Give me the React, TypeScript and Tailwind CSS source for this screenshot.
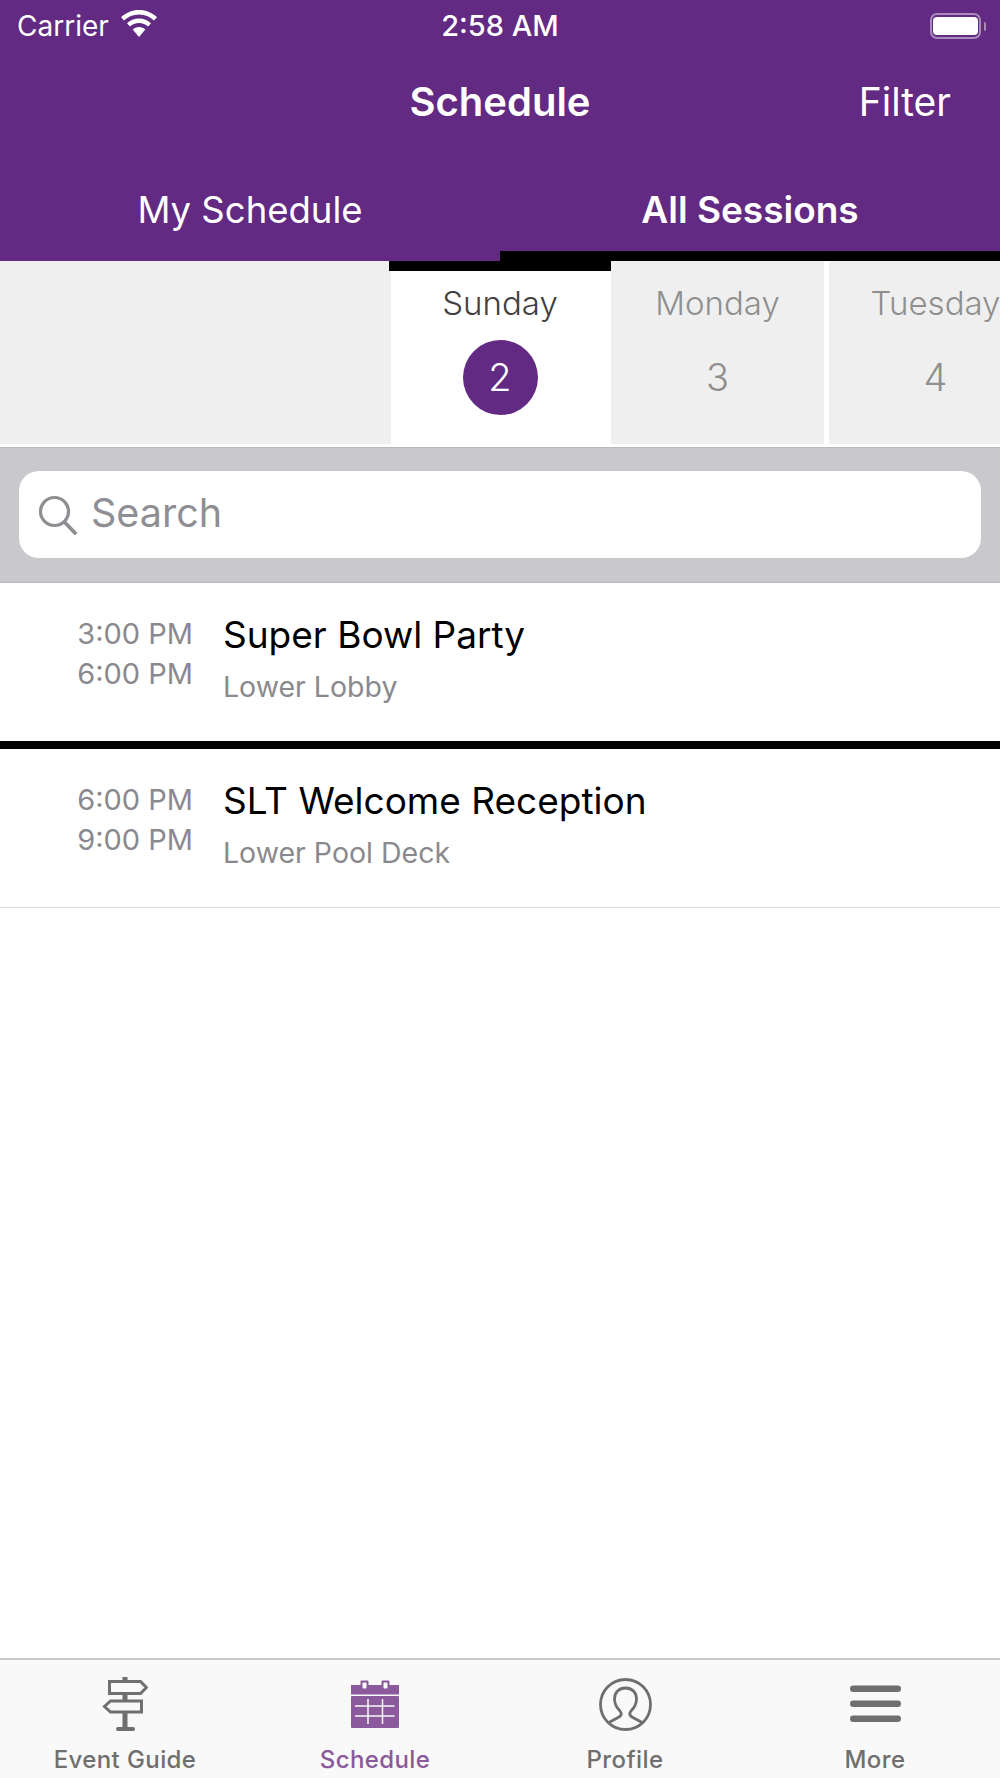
const SignIcon = () => (
  <svg width="46" height="54" viewBox="0 0 46 54" fill="none" stroke="#6f6f6f" strokeWidth="3">
    <path d="M7.500 4.500h31l6 6-6 6h-31z" />
    <path d="M39.500 24h-31l-6 5.500 6 5.500h31z" />
    <path d="M23 0v4.500M23 16.500V24M23 35v16" strokeWidth="5" />
    <path d="M16 52h15" strokeWidth="4" strokeLinecap="round" />
  </svg>
);

const CalendarIcon = () => (
  <svg width="48" height="48" viewBox="0 0 48 48" fill="none">
    <path d="M0 5h9.500V1.500a1 1 0 0 1 1-1h6a1 1 0 0 1 1 1V5h13V1.500a1 1 0 0 1 1-1h6a1 1 0 0 1 1 1V5H48v9.500H0z" fill="#8a5a9c" />
    <rect x="11.500" y="2.500" width="4" height="6" rx="1" fill="#f9f9f9" />
    <rect x="32.500" y="2.500" width="4" height="6" rx="1" fill="#f9f9f9" />
    <rect x="0" y="16" width="48" height="32" rx="1" fill="#8a5a9c" />
    <path d="M4 26h39.500M4 36h39.500M17 19v25M31.500 19v25" stroke="#f9f9f9" strokeWidth="1.500" />
  </svg>
);

const ProfileIcon = () => (
  <svg width="53" height="53" viewBox="0 0 53 53" fill="none" stroke="#6f6f6f" strokeWidth="2.800">
    <circle cx="26.500" cy="26.500" r="25" />
    <path d="M9 45l11-6c2.500-1.500 3-3.500 1-6-3-3-5.500-7-5.500-12 0-6.500 4.500-11 11-11s11 4.500 11 11c0 5-2.500 9-5.500 12-2 2.500-1.500 4.500 1 6l11 6" />
  </svg>
);

const MoreIcon = () => (
  <svg width="51" height="38" viewBox="0 0 51 38" fill="#6f6f6f">
    <rect x="0" y="0.500" width="51" height="6.500" rx="3.250" />
    <rect x="0" y="15.500" width="51" height="6.500" rx="3.250" />
    <rect x="0" y="30.500" width="51" height="6.500" rx="3.250" />
  </svg>
);

const WifiIcon = () => (
  <svg width="36" height="27" viewBox="0 0 36 27" fill="white">
    <path d="M18 0C11 0 5 2.700 0 7.200l3 3.300C7 6.700 12.200 4.500 18 4.500s11 2.200 15 6l3-3.300C31 2.700 25 0 18 0z" />
    <path d="M18 8.500c-4.700 0-8.800 1.800-12 4.800l3 3.200c2.300-2.200 5.500-3.500 9-3.500s6.700 1.300 9 3.500l3-3.200c-3.200-3-7.300-4.800-12-4.800z" />
    <path d="M18 17c-2.500 0-4.700 1-6.300 2.500L18 27l6.300-7.500C22.700 18 20.500 17 18 17z" />
  </svg>
);

const SearchIcon = () => (
  <svg width="40" height="40" viewBox="0 0 40 40" fill="none" stroke="#8e8e93" strokeWidth="3.200">
    <circle cx="16.500" cy="16.500" r="14" />
    <path d="M26.500 27l10.500 11" strokeWidth="3.800" strokeLinecap="round" />
  </svg>
);

const sessions = [
  { start: '3:00 PM', end: '6:00 PM', title: 'Super Bowl Party', room: 'Lower Lobby' },
  { start: '6:00 PM', end: '9:00 PM', title: 'SLT Welcome Reception', room: 'Lower Pool Deck' },
];

const SessionRow = ({ start, end, title, room }: (typeof sessions)[number]) => (
  <div className="flex h-[158px] shrink-0">
    <div className="w-[193px] shrink-0 pt-[31px] text-right text-[29px] leading-[40px] text-[#8a8a8e]">
      <div>{start}</div>
      <div>{end}</div>
    </div>
    <div className="ml-[30px] pt-[30px]">
      <div className="text-[37px] leading-[44px] text-black">{title}</div>
      <div className="mt-[14px] text-[28.500px] leading-[32px] text-[#8a8a8e]">{room}</div>
    </div>
  </div>
);

const TabItem = ({ label, icon, active }: { label: string; icon: JSX.Element; active?: boolean }) => (
  <div className="flex flex-1 flex-col items-center">
    <div className="flex h-[56px] items-center justify-center">{icon}</div>
    <div className={`mt-[13px] text-[24px] leading-[30px] font-medium tracking-[0.4px] ${active ? 'text-[#8a5a9c]' : 'text-[#6f6f6f]'}`}>
      {label}
    </div>
  </div>
);

export default function App() {
  return (
    <div className="flex h-[1778px] w-[1000px] flex-col overflow-hidden bg-white font-['Inter',sans-serif]">
      <div className="shrink-0 bg-[#622a82] text-white">
        <div className="relative flex h-[52px] items-center pl-[17px] pr-[14px]">
          <span className="text-[28px]">Carrier</span>
          <span className="ml-[12px] mt-[-5px]"><WifiIcon /></span>
          <span className="absolute left-0 right-0 text-center text-[29px] font-medium">2:58 AM</span>
          <div className="ml-auto flex items-center">
            <div className="flex h-[26px] w-[51px] items-center justify-center rounded-[7px] border-2 border-[#a88abb]">
              <div className="h-[18px] w-[45px] rounded-[4px] bg-white" />
            </div>
            <div className="ml-[3px] h-[9px] w-[2px] rounded-r bg-[#a88abb]" />
          </div>
        </div>
        <div className="relative flex h-[100px] items-center justify-center">
          <span className="text-[40px] font-semibold">Schedule</span>
          <span className="absolute right-[49px] text-[39px]">Filter</span>
        </div>
        <div className="flex h-[109px]">
          <div className="flex flex-1 items-center justify-center pt-[7px] text-[36.500px]">My Schedule</div>
          <div className="flex flex-1 items-center justify-center border-b-[10px] border-black pt-[16px] text-[37px] font-semibold">
            All Sessions
          </div>
        </div>
      </div>

      <div className="flex h-[183px] shrink-0 overflow-hidden">
        <div className="w-[389px] shrink-0 bg-[#efefef]" />
        <div className="w-[222px] shrink-0 border-t-[10px] border-black">
          <div className="h-full border-l-2 border-[#efefef] bg-white pr-[2px] text-center">
            <div className="pt-[12px] text-[33px] leading-[40px] font-light text-[#404040]">Sunday</div>
            <div className="mx-auto mt-[17px] flex h-[75px] w-[75px] items-center justify-center rounded-full bg-[#622a82] text-[38px] font-light text-white">
              2
            </div>
          </div>
        </div>
        <div className="w-[213px] shrink-0 bg-[#efefef] text-center text-[#8f8f8f]">
          <div className="mt-[22px] text-[33px] leading-[40px] font-light">Monday</div>
          <div className="mt-[17px] flex h-[75px] items-center justify-center text-[38px] font-light">3</div>
        </div>
        <div className="ml-[5px] w-[213px] shrink-0 bg-[#efefef] text-center text-[#8f8f8f]">
          <div className="mt-[22px] text-[33px] leading-[40px] font-light">Tuesday</div>
          <div className="mt-[17px] flex h-[75px] items-center justify-center text-[38px] font-light">4</div>
        </div>
      </div>

      <div className="mt-[3px] h-[136px] shrink-0 border-y border-[#b8b8bc] bg-[#c9c8cd] px-[19px] pt-[23px]">
        <div className="flex h-[87px] items-center rounded-[20px] bg-white pl-[19px]">
          <SearchIcon />
          <span className="ml-[13px] pb-[2px] text-[39.500px] text-[#8e8e93]">Search</span>
        </div>
      </div>

      <SessionRow {...sessions[0]} />
      <div className="h-[8px] shrink-0 bg-black" />
      <SessionRow {...sessions[1]} />
      <div className="h-px shrink-0 bg-[#dcdcdc]" />

      <div className="flex-1" />

      <div className="flex h-[120px] shrink-0 border-t-2 border-[#c8c8c8] bg-[#f9f9f9] pt-[16px]">
        <TabItem label="Event Guide" icon={<SignIcon />} />
        <TabItem label="Schedule" icon={<CalendarIcon />} active />
        <TabItem label="Profile" icon={<ProfileIcon />} />
        <TabItem label="More" icon={<MoreIcon />} />
      </div>
    </div>
  );
}
